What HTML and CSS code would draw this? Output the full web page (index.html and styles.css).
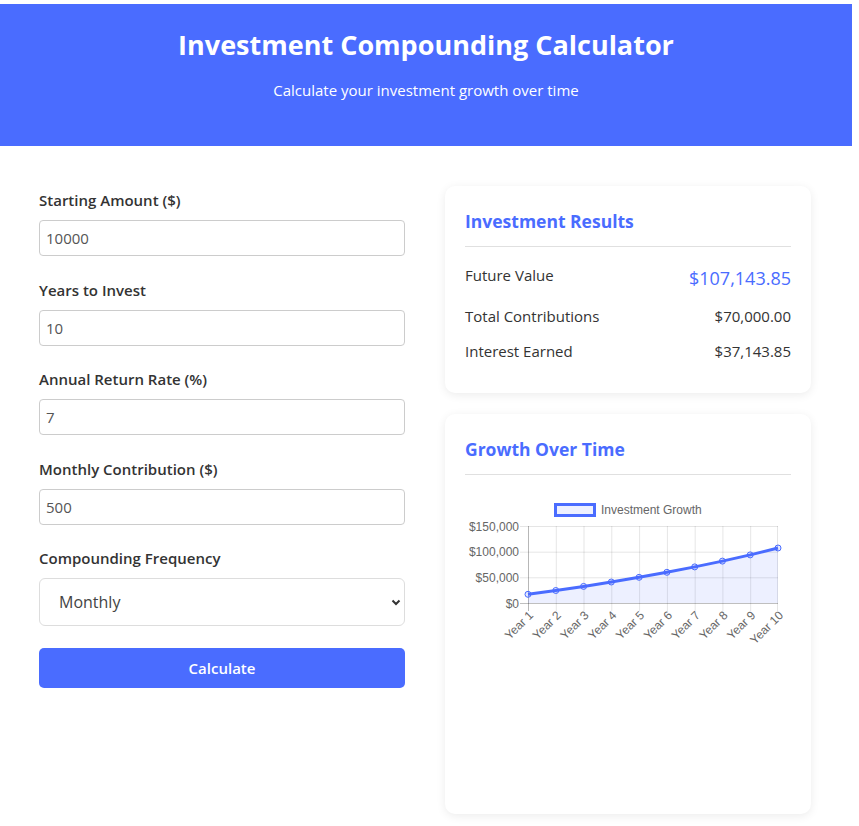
FILE: index.html
```html
<!DOCTYPE html>
<html lang="en">
<head>
<meta charset="utf-8">
<title>Investment Compounding Calculator</title>
<link rel="stylesheet" href="styles.css">
</head>
<body>
<div class="page">
  <header class="hero">
    <h1 class="hero-title">Investment Compounding Calculator</h1>
    <p class="hero-sub">Calculate your investment growth over time</p>
  </header>
  <main class="layout">
    <section class="form">
      <div class="group">
        <label class="label">Starting Amount ($)</label>
        <input class="input" type="text" value="10000">
      </div>
      <div class="group">
        <label class="label">Years to Invest</label>
        <input class="input" type="text" value="10">
      </div>
      <div class="group">
        <label class="label">Annual Return Rate (%)</label>
        <input class="input" type="text" value="7">
      </div>
      <div class="group">
        <label class="label">Monthly Contribution ($)</label>
        <input class="input" type="text" value="500">
      </div>
      <div class="group">
        <label class="label">Compounding Frequency</label>
        <div class="select-wrap">
          <select class="select">
            <option>Monthly</option>
            <option>Quarterly</option>
            <option>Annually</option>
          </select>
          <svg class="chev" width="10" height="7" viewBox="0 0 10 7"><path d="M1.5 1.5 L5 5 L8.5 1.5" fill="none" stroke="#333" stroke-width="2"/></svg>
        </div>
      </div>
      <button class="btn">Calculate</button>
    </section>
    <section class="side">
      <div class="card">
        <h2 class="card-title">Investment Results</h2>
        <div class="rows">
          <div class="row"><span class="row-label">Future Value</span><span class="row-value big">$107,143.85</span></div>
          <div class="row"><span class="row-label">Total Contributions</span><span class="row-value">$70,000.00</span></div>
          <div class="row"><span class="row-label">Interest Earned</span><span class="row-value">$37,143.85</span></div>
        </div>
      </div>
      <div class="card">
        <h2 class="card-title">Growth Over Time</h2>
        <div class="chart">
          <svg class="chart-svg" width="326" height="163" viewBox="0 0 326 163">
            <rect x="90.5" y="14.5" width="39" height="11" fill="rgba(74,108,255,0.1)" stroke="#4a6cff" stroke-width="3"/>
            <text x="136" y="23.5" class="ct">Investment Growth</text>
            <g stroke="rgba(0,0,0,0.1)" stroke-width="1">
              <line x1="55" y1="36.5" x2="313" y2="36.5"/>
              <line x1="55" y1="62.2" x2="313" y2="62.2"/>
              <line x1="55" y1="87.8" x2="313" y2="87.8"/>
              <line x1="63.5" y1="36" x2="63.5" y2="121"/>
              <line x1="91.3" y1="36" x2="91.3" y2="121"/>
              <line x1="119" y1="36" x2="119" y2="121"/>
              <line x1="146.8" y1="36" x2="146.8" y2="121"/>
              <line x1="174.6" y1="36" x2="174.6" y2="121"/>
              <line x1="202.4" y1="36" x2="202.4" y2="121"/>
              <line x1="230.2" y1="36" x2="230.2" y2="121"/>
              <line x1="257.9" y1="36" x2="257.9" y2="121"/>
              <line x1="285.7" y1="36" x2="285.7" y2="121"/>
              <line x1="312.5" y1="36" x2="312.5" y2="121"/>
            </g>
            <line x1="55" y1="113.5" x2="313" y2="113.5" stroke="rgba(0,0,0,0.25)" stroke-width="1"/>
            <line x1="63.5" y1="36" x2="63.5" y2="121" stroke="rgba(0,0,0,0.2)" stroke-width="1"/>
            <g class="ct" text-anchor="end">
              <text x="54" y="40.5">$150,000</text>
              <text x="54" y="66.2">$100,000</text>
              <text x="54" y="91.8">$50,000</text>
              <text x="54" y="117.5">$0</text>
            </g>
            <polygon points="63,104.3 90.8,100.5 118.6,96.4 146.3,92 174.1,87.3 201.9,82.3 229.7,76.9 257.4,71.1 285.2,64.9 313,58 313,113 63,113" fill="rgba(74,108,255,0.1)"/>
            <polyline points="63,104.3 90.8,100.5 118.6,96.4 146.3,92 174.1,87.3 201.9,82.3 229.7,76.9 257.4,71.1 285.2,64.9 313,58" fill="none" stroke="#4a6cff" stroke-width="3" stroke-linejoin="round"/>
            <g fill="rgba(74,108,255,0.15)" stroke="#4a6cff" stroke-width="1">
              <circle cx="63" cy="104.3" r="3"/>
              <circle cx="90.8" cy="100.5" r="3"/>
              <circle cx="118.6" cy="96.4" r="3"/>
              <circle cx="146.3" cy="92" r="3"/>
              <circle cx="174.1" cy="87.3" r="3"/>
              <circle cx="201.9" cy="82.3" r="3"/>
              <circle cx="229.7" cy="76.9" r="3"/>
              <circle cx="257.4" cy="71.1" r="3"/>
              <circle cx="285.2" cy="64.9" r="3"/>
              <circle cx="313" cy="58" r="3"/>
            </g>
            <g class="ct" text-anchor="end">
              <text transform="translate(66,123) rotate(-45)" dy="0.35em">Year 1</text>
              <text transform="translate(93.8,123) rotate(-45)" dy="0.35em">Year 2</text>
              <text transform="translate(121.6,123) rotate(-45)" dy="0.35em">Year 3</text>
              <text transform="translate(149.3,123) rotate(-45)" dy="0.35em">Year 4</text>
              <text transform="translate(177.1,123) rotate(-45)" dy="0.35em">Year 5</text>
              <text transform="translate(204.9,123) rotate(-45)" dy="0.35em">Year 6</text>
              <text transform="translate(232.7,123) rotate(-45)" dy="0.35em">Year 7</text>
              <text transform="translate(260.4,123) rotate(-45)" dy="0.35em">Year 8</text>
              <text transform="translate(288.2,123) rotate(-45)" dy="0.35em">Year 9</text>
              <text transform="translate(316,123) rotate(-45)" dy="0.35em">Year 10</text>
            </g>
          </svg>
        </div>
      </div>
    </section>
  </main>
</div>
</body>
</html>
```
FILE: styles.css
```css
* { box-sizing: border-box; }
html, body { margin: 0; padding: 0; background: #fff; }
body {
  font-family: "Open Sans", "Noto Sans", sans-serif;
  color: #333;
}
.page { width: 852px; padding-top: 4px; }
.hero {
  background: #4a6cff;
  color: #fff;
  text-align: center;
  height: 142px;
  padding-top: 24px;
}
.hero-title {
  margin: 0;
  font-size: 27px;
  line-height: 34px;
  font-weight: 700;
}
.hero-sub {
  margin: 17px 0 0;
  font-size: 15px;
  line-height: 22px;
}
.layout {
  display: grid;
  grid-template-columns: 366px 366px;
  column-gap: 40px;
  padding: 40px 0 12px 39px;
  align-items: start;
}
.form { padding-top: 2px; }
.group { margin-bottom: 21.5px; }
.label {
  display: block;
  font-size: 15px;
  font-weight: 600;
  line-height: 24px;
  margin-bottom: 8px;
  color: #333;
}
.input {
  display: block;
  width: 100%;
  height: 36px;
  border: 1px solid #ccc;
  border-radius: 4px;
  padding: 0 6px;
  font-family: inherit;
  font-size: 15px;
  color: #555;
  background: #fff;
}
.select-wrap { position: relative; }
.select {
  display: block;
  width: 100%;
  height: 48px;
  border: 1px solid #ddd;
  border-radius: 6px;
  padding: 0 19px;
  font-family: inherit;
  font-size: 16px;
  color: #444;
  background: #fff;
  appearance: none;
  -webkit-appearance: none;
}
.chev { position: absolute; right: 4px; top: 21px; }
.btn {
  display: block;
  width: 100%;
  height: 40px;
  margin-top: 0;
  border: 0;
  border-radius: 5px;
  background: #4a6cff;
  color: #fff;
  font-family: inherit;
  font-size: 15px;
  font-weight: 600;
}
.side { display: flex; flex-direction: column; gap: 21px; }
.card {
  background: #fff;
  border-radius: 10px;
  box-shadow: 0 2px 10px rgba(0,0,0,0.08);
  padding: 20px;
}
.card-title {
  margin: 0 0 16px;
  font-size: 17.5px;
  line-height: 30px;
  font-weight: 700;
  color: #4a6cff;
  padding-bottom: 10px;
  border-bottom: 1px solid #e0e0e0;
}
.rows { padding-bottom: 10px; }
.row { display: flex; justify-content: space-between; }
.row + .row { margin-top: 11px; }
.row-label { font-size: 15px; line-height: 24px; }
.row-value { font-size: 15px; line-height: 24px; }
.row-value.big { font-size: 18px; line-height: 30px; color: #4a6cff; }
.chart { height: 304px; margin-top: -1px; }
.chart-svg { display: block; }
.ct { font-family: "Liberation Sans", Arial, sans-serif; font-size: 12px; fill: #666; }
```
